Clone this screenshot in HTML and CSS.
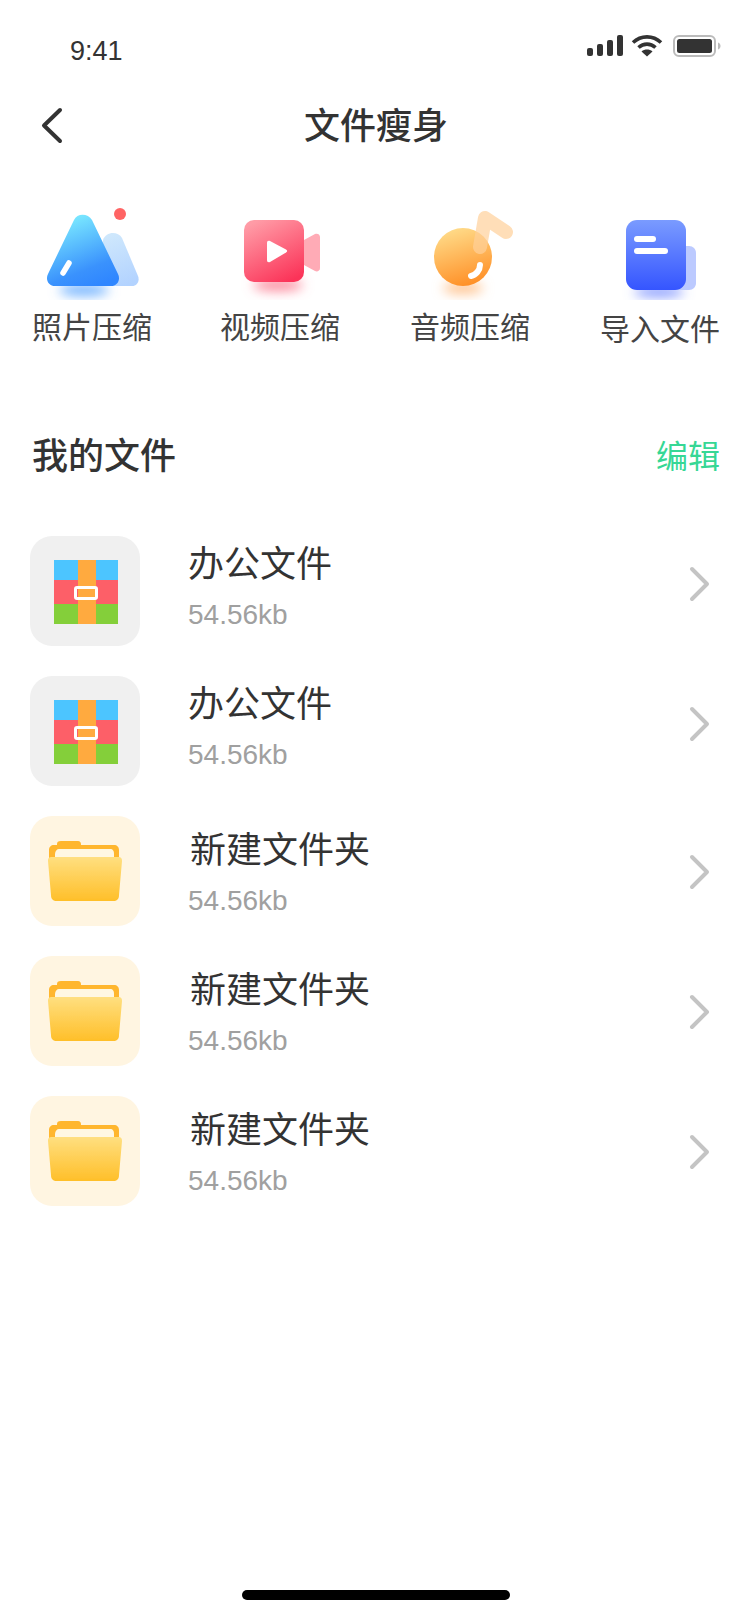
FILE: index.html
```html
<!DOCTYPE html>
<html lang="zh-CN">
<head>
    <meta charset="UTF-8">
    <meta name="viewport" content="width=device-width, initial-scale=1.0">
    <title>文件瘦身</title>
    <link rel="stylesheet" href="styles.css">
</head>
<body>
    <svg class="defs" width="0" height="0">
        <defs>
            <linearGradient id="g-photo" x1="0.3" y1="0" x2="0.7" y2="1">
                <stop offset="0" stop-color="#7eeeff"/>
                <stop offset="0.75" stop-color="#3a92fd"/>
                <stop offset="1" stop-color="#2f86ff"/>
            </linearGradient>
            <linearGradient id="g-photo-back" x1="0.3" y1="0" x2="0.6" y2="1">
                <stop offset="0" stop-color="#cfe8fc"/>
                <stop offset="1" stop-color="#b3d3ff"/>
            </linearGradient>
            <linearGradient id="g-video" x1="0.25" y1="0" x2="0.75" y2="1">
                <stop offset="0" stop-color="#ff9ba6"/>
                <stop offset="1" stop-color="#fb3358"/>
            </linearGradient>
            <linearGradient id="g-music" x1="0.3" y1="0" x2="0.6" y2="1">
                <stop offset="0" stop-color="#ffdc8a"/>
                <stop offset="1" stop-color="#ff8f26"/>
            </linearGradient>
            <linearGradient id="g-doc" x1="0.5" y1="0" x2="0.5" y2="1">
                <stop offset="0" stop-color="#7a9bff"/>
                <stop offset="1" stop-color="#3555ff"/>
            </linearGradient>
            <linearGradient id="g-folder" x1="0.5" y1="0" x2="0.5" y2="1">
                <stop offset="0" stop-color="#ffdf80"/>
                <stop offset="1" stop-color="#ffbf29"/>
            </linearGradient>
            <filter id="soft" x="-50%" y="-100%" width="200%" height="300%">
                <feGaussianBlur stdDeviation="6"/>
            </filter>
            <filter id="soft-sm" x="-10%" y="-10%" width="120%" height="120%">
                <feGaussianBlur stdDeviation="0.6"/>
            </filter>

            <symbol id="icon-zip" viewBox="0 0 110 110">
                <rect x="24" y="24" width="64" height="20" fill="#4cc5ff"/>
                <rect x="24" y="44" width="64" height="24" fill="#fd5f68"/>
                <rect x="24" y="68" width="64" height="20" fill="#84cf3a"/>
                <rect x="48" y="24" width="18" height="64" fill="#ffaa3f"/>
                <rect x="45.500" y="51.500" width="21" height="11" rx="1.500" fill="none" stroke="#fff" stroke-width="3"/>
            </symbol>

            <symbol id="icon-folder" viewBox="0 0 110 110">
                <path d="M19 34c0-3 2-5 5-5h3v-1c0-2 1-3 4-3h17c2 0 3 1 3 4h33c3 0 5 2 5 5v20H19z" fill="#ffb62e"/>
                <path d="M25 38c0-3 2-5 4-5h51c3 0 4 2 4 5v12H25z" fill="#fff7e2"/>
                <path d="M18 45c0-3 1-4 4-4h66c3 0 4 1 4 4l-3 34c0 4-2 6-6 6H27c-4 0-6-2-6-6z" fill="url(#g-folder)" filter="url(#soft-sm)"/>
            </symbol>

            <symbol id="icon-arrow" viewBox="0 0 24 40">
                <path d="M4 5l15 15L4 35" fill="none" stroke="#c4c4c4" stroke-width="4" stroke-linecap="round" stroke-linejoin="round"/>
            </symbol>
        </defs>
    </svg>

    <header class="status-bar">
        <span class="status-time">9:41</span>
        <svg class="status-icons" width="138" height="24" viewBox="0 0 138 24">
            <rect x="1" y="14" width="6" height="8" rx="2" fill="#333"/>
            <rect x="11" y="10" width="6" height="12" rx="2" fill="#333"/>
            <rect x="21" y="6" width="6" height="16" rx="2" fill="#333"/>
            <rect x="31" y="1" width="6" height="21" rx="2" fill="#333"/>
            <path d="M47 8.500c8-7.500 20-7.500 28 0" fill="none" stroke="#333" stroke-width="3.600"/>
            <path d="M52.500 13.500c5-4.500 12-4.500 17 0" fill="none" stroke="#333" stroke-width="3.600"/>
            <path d="M61 22.500l-5.500-5c3.200-2.600 7.800-2.600 11 0z" fill="#333"/>
            <rect x="88" y="2" width="41" height="20" rx="5" fill="none" stroke="#bbb" stroke-width="2"/>
            <rect x="91" y="5" width="35" height="14" rx="2.500" fill="#333"/>
            <path d="M132 8.500c1.500.5 2.500 1.800 2.500 3.500s-1 3-2.500 3.500z" fill="#bbb"/>
        </svg>
    </header>

    <nav class="nav-bar">
        <svg class="nav-back" width="24" height="40" viewBox="0 0 24 40">
            <path d="M20 5L4 20.500 20 36" fill="none" stroke="#333" stroke-width="4" stroke-linecap="round" stroke-linejoin="round"/>
        </svg>
        <h1 class="nav-title">文件瘦身</h1>
    </nav>

    <section class="tools">
        <div class="tool">
            <svg class="tool-icon" width="120" height="100" viewBox="32 200 120 100">
                <ellipse cx="84" cy="290" rx="25" ry="6" fill="#5aa6ff" fill-opacity="0.85" filter="url(#soft)"/>
                <path d="M103 240c3-9 15-9 19-2l16 38c2 5-1 10-6 10H100z" fill="url(#g-photo-back)"/>
                <path d="M74 220c3-7 14-7 18 0l26 54c3 6-1 12-7 12H55c-6 0-10-6-7-12z" fill="url(#g-photo)"/>
                <path d="M63 273l6-10" fill="none" stroke="#fff" stroke-width="5.500" stroke-linecap="round"/>
                <circle cx="120" cy="214" r="6" fill="#ff6464"/>
            </svg>
            <span class="tool-label">照片压缩</span>
        </div>
        <div class="tool">
            <svg class="tool-icon" width="120" height="100" viewBox="220 200 120 100">
                <ellipse cx="278" cy="285" rx="25" ry="6" fill="#fb6a82" fill-opacity="0.8" filter="url(#soft)"/>
                <path d="M304 240l11-6c2-1 5 0 5 3v31c0 3-3 4-5 3l-11-6z" fill="#ffabb6"/>
                <rect x="244" y="220" width="60" height="62" rx="10" fill="url(#g-video)"/>
                <path d="M267 243c0-2 1-2.500 3-2l16 8.500c1.500 1 1.500 2 0 3l-16 9.500c-2 .5-3 0-3-2z" fill="#fff"/>
            </svg>
            <span class="tool-label">视频压缩</span>
        </div>
        <div class="tool">
            <svg class="tool-icon" width="120" height="100" viewBox="410 200 120 100">
                <ellipse cx="463" cy="288" rx="20" ry="6" fill="#ffb473" fill-opacity="0.8" filter="url(#soft)"/>
                <circle cx="463" cy="257" r="29" fill="url(#g-music)"/>
                <path d="M480 247l5-29 21 14" fill="none" stroke="#ffd09a" stroke-opacity="0.7" stroke-width="14" stroke-linecap="round" stroke-linejoin="round"/>
                <path d="M471 276c5-1 9-6 9-11" fill="none" stroke="#fff" stroke-width="6" stroke-linecap="round"/>
            </svg>
            <span class="tool-label">音频压缩</span>
        </div>
        <div class="tool">
            <svg class="tool-icon" width="120" height="100" viewBox="600 200 120 100">
                <ellipse cx="659" cy="292" rx="25" ry="5" fill="#6f86ff" fill-opacity="0.9" filter="url(#soft)"/>
                <path d="M670 246h19c4 0 7 3 7 7v30c0 4-3 7-7 7h-19z" fill="#bccaff"/>
                <rect x="626" y="220" width="60" height="70" rx="11" fill="url(#g-doc)"/>
                <rect x="634" y="236" width="22" height="6" rx="3" fill="#fff"/>
                <rect x="634" y="248" width="34" height="6" rx="3" fill="#fff"/>
            </svg>
            <span class="tool-label tool-label-low">导入文件</span>
        </div>
    </section>

    <div class="section-head">
        <h2 class="section-title">我的文件</h2>
        <span class="section-action">编辑</span>
    </div>

    <ul class="file-list">
        <li class="file-row file-row-zip">
            <div class="file-tile file-tile-zip"><svg width="110" height="110"><use href="#icon-zip"/></svg></div>
            <div class="file-body">
                <div class="file-name">办公文件</div>
                <div class="file-size">54.56kb</div>
            </div>
            <svg class="file-arrow" width="24" height="40"><use href="#icon-arrow"/></svg>
        </li>
        <li class="file-row file-row-zip">
            <div class="file-tile file-tile-zip"><svg width="110" height="110"><use href="#icon-zip"/></svg></div>
            <div class="file-body">
                <div class="file-name">办公文件</div>
                <div class="file-size">54.56kb</div>
            </div>
            <svg class="file-arrow" width="24" height="40"><use href="#icon-arrow"/></svg>
        </li>
        <li class="file-row file-row-folder">
            <div class="file-tile file-tile-folder"><svg width="110" height="110"><use href="#icon-folder"/></svg></div>
            <div class="file-body">
                <div class="file-name">新建文件夹</div>
                <div class="file-size">54.56kb</div>
            </div>
            <svg class="file-arrow" width="24" height="40"><use href="#icon-arrow"/></svg>
        </li>
        <li class="file-row file-row-folder">
            <div class="file-tile file-tile-folder"><svg width="110" height="110"><use href="#icon-folder"/></svg></div>
            <div class="file-body">
                <div class="file-name">新建文件夹</div>
                <div class="file-size">54.56kb</div>
            </div>
            <svg class="file-arrow" width="24" height="40"><use href="#icon-arrow"/></svg>
        </li>
        <li class="file-row file-row-folder">
            <div class="file-tile file-tile-folder"><svg width="110" height="110"><use href="#icon-folder"/></svg></div>
            <div class="file-body">
                <div class="file-name">新建文件夹</div>
                <div class="file-size">54.56kb</div>
            </div>
            <svg class="file-arrow" width="24" height="40"><use href="#icon-arrow"/></svg>
        </li>
    </ul>

    <div class="home-bar"></div>
</body>
</html>
```

FILE: styles.css
```css
/* Geral */
html, body {
    margin: 0;
    padding: 0;
}

body {
    width: 750px;
    height: 1624px;
    display: flex;
    flex-direction: column;
    overflow: hidden;
    background-color: #fff;
    color: #333;
    font-family: "Liberation Sans", "Noto Sans CJK SC", sans-serif;
}

.defs {
    position: absolute;
}

/* Status bar */
.status-bar {
    height: 100px;
    display: flex;
    justify-content: space-between;
    padding: 0 26px 0 70px;
    box-sizing: border-box;
}

.status-time {
    margin-top: 34px;
    font-size: 27px;
    line-height: 34px;
}

.status-icons {
    margin-top: 34px;
}

/* Nav */
.nav-bar {
    height: 50px;
    display: flex;
    align-items: center;
    justify-content: center;
    position: relative;
}

.nav-back {
    position: absolute;
    left: 40px;
    top: 5px;
}

.nav-title {
    margin: 0;
    padding: 4px 0 0 2px;
    font-size: 36px;
    line-height: 50px;
    font-weight: 500;
}

/* Tools */
.tools {
    display: grid;
    grid-template-columns: 188px 190px 190px 120px;
    margin-top: 50px;
    padding-left: 32px;
}

.tool {
    width: 120px;
    display: flex;
    flex-direction: column;
    align-items: center;
}

.tool-icon {
    display: block;
}

.tool-label {
    padding-top: 1px;
    font-size: 30px;
    line-height: 54px;
    color: #444;
    white-space: nowrap;
}

.tool-label-low {
    padding-top: 3px;
}

/* Section header */
.section-head {
    height: 50px;
    margin-top: 75px;
    padding: 0 30px 0 32px;
    display: flex;
    align-items: center;
    justify-content: space-between;
}

.section-title {
    margin: 0;
    font-size: 36px;
    line-height: 50px;
    font-weight: 500;
}

.section-action {
    font-size: 32px;
    line-height: 50px;
    color: #36d795;
}

/* List */
.file-list {
    list-style: none;
    margin: 54px 0 0;
    padding: 0 38px 0 30px;
    display: flex;
    flex-direction: column;
    gap: 30px;
}

.file-row {
    display: flex;
    align-items: center;
}

.file-tile {
    width: 110px;
    height: 110px;
    border-radius: 22px;
    flex-shrink: 0;
}

.file-tile svg {
    display: block;
}

.file-tile-zip {
    background-color: #f0f0f0;
}

.file-tile-folder {
    background-color: #fff5e1;
}

.file-body {
    flex: 1;
    margin-left: 48px;
}

.file-row-zip .file-body {
    padding-bottom: 6px;
}

.file-row-folder .file-body {
    padding-top: 6px;
}

.file-row-folder .file-name {
    margin-left: 2px;
}

.file-name {
    font-size: 36px;
    line-height: 44px;
    color: #333;
}

.file-size {
    margin-top: 10px;
    font-size: 28px;
    line-height: 36px;
    color: #a0a0a0;
}

.file-arrow {
    flex-shrink: 0;
}

.file-row-zip .file-arrow {
    margin-bottom: 14px;
}

.file-row-folder .file-arrow {
    margin-top: 2px;
}

/* Home bar */
.home-bar {
    width: 268px;
    height: 10px;
    margin: auto 240px 24px 242px;
    border-radius: 5px;
    background-color: #000;
}
```
